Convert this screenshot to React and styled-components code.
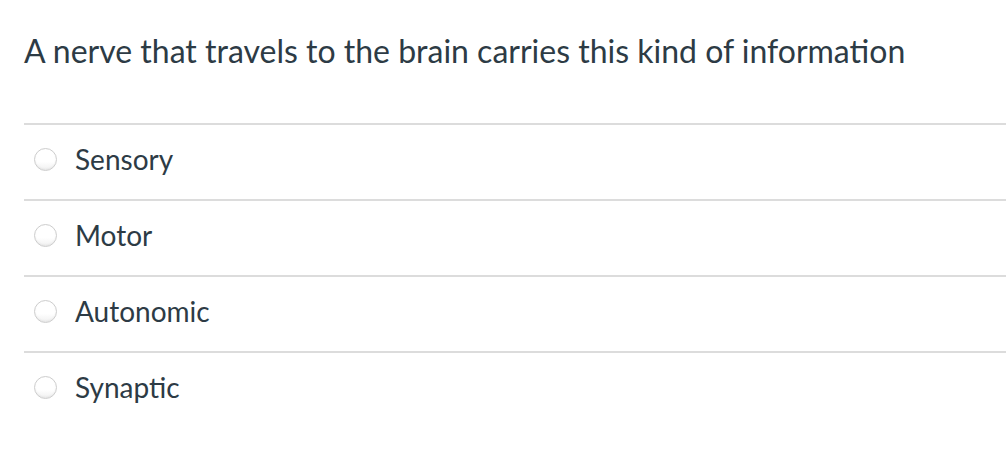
import styled, { createGlobalStyle } from "styled-components";

const GlobalStyle = createGlobalStyle`
  body {
    margin: 0;
    background: #fff;
    font-family: Lato, "Liberation Sans", sans-serif;
    color: #2d3b45;
  }
`;

const Page = styled.div`
  padding: 28px 0 0 24px;
`;

const Question = styled.h2`
  margin: 0 0 49px;
  font-size: 32px;
  font-weight: 400;
  line-height: 46px;
`;

const AnswerList = styled.div`
  display: flex;
  flex-direction: column;
`;

const Answer = styled.label`
  display: flex;
  align-items: center;
  box-sizing: border-box;
  height: 76px;
  padding: 0 0 6px 10px;
  border-top: 2px solid #dcdcdc;
  font-size: 28px;
`;

const Radio = styled.span`
  width: 21px;
  height: 21px;
  border-radius: 50%;
  border: 1px solid #cdcdcd;
  background: linear-gradient(#fff 60%, #f0f0f0);
  box-shadow: inset 0 -1px 2px rgba(0, 0, 0, 0.05);
  margin-right: 18px;
  flex-shrink: 0;
`;

const answers = ["Sensory", "Motor", "Autonomic", "Synaptic"];

export default function App() {
  return (
    <>
      <GlobalStyle />
      <Page>
        <Question>
          A nerve that travels to the brain carries this kind of information
        </Question>
        <AnswerList>
          {answers.map((a) => (
            <Answer key={a}>
              <Radio />
              {a}
            </Answer>
          ))}
        </AnswerList>
      </Page>
    </>
  );
}
